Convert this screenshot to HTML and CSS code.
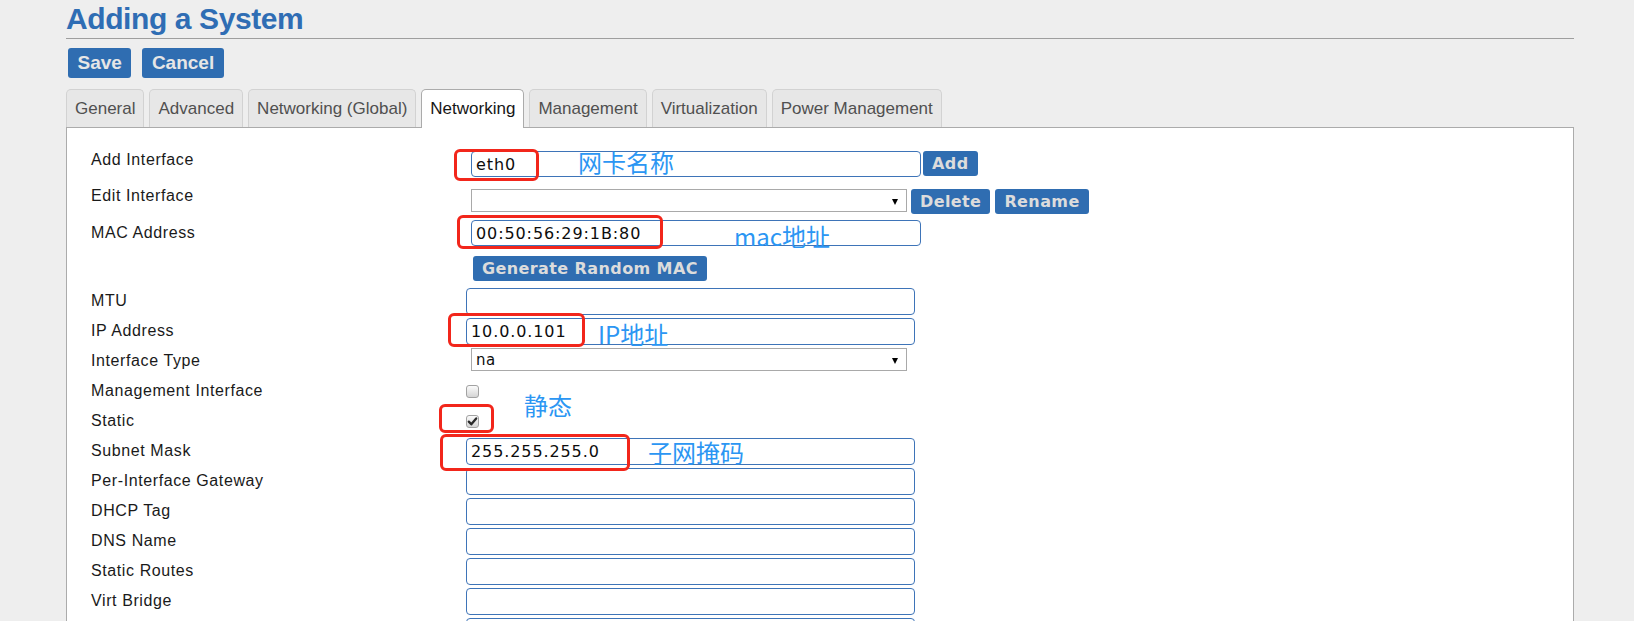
FILE: index.html
```html
<!DOCTYPE html>
<html lang="en">
<head>
<meta charset="utf-8">
<title>Adding a System</title>
<link rel="stylesheet" href="styles.css">
</head>
<body>
<div class="page">
  <h1 class="title">Adding a System</h1>
  <div class="actions">
    <button class="btn btn-lg">Save</button>
    <button class="btn btn-lg">Cancel</button>
  </div>
  <ul class="tabs">
    <li class="tab">General</li>
    <li class="tab">Advanced</li>
    <li class="tab">Networking (Global)</li>
    <li class="tab tab-active">Networking</li>
    <li class="tab">Management</li>
    <li class="tab">Virtualization</li>
    <li class="tab">Power Management</li>
  </ul>
  <div class="panel">
    <div class="row row-top row-add">
      <label class="lbl">Add Interface</label>
      <input class="txt txt-main" type="text" value="eth0">
      <button class="btn btn-sm btn-add">Add</button>
    </div>
    <div class="row row-top row-edit">
      <label class="lbl">Edit Interface</label>
      <div class="select select-edit"><select><option></option></select></div>
      <button class="btn btn-sm btn-delete">Delete</button>
      <button class="btn btn-sm btn-rename">Rename</button>
    </div>
    <div class="row row-mac">
      <label class="lbl">MAC Address</label>
      <input class="txt txt-main" type="text" value="00:50:56:29:1B:80">
    </div>
    <div class="row row-gen">
      <span class="lbl"></span>
      <button class="btn btn-sm btn-gen">Generate Random MAC</button>
    </div>
    <div class="details">
      <div class="row row-d"><label class="lbl">MTU</label><input class="txt txt-detail" type="text" value=""></div>
      <div class="row row-d"><label class="lbl">IP Address</label><input class="txt txt-detail" type="text" value="10.0.0.101"></div>
      <div class="row row-d"><label class="lbl">Interface Type</label><div class="select select-type"><select><option>na</option></select></div></div>
      <div class="row row-d"><label class="lbl">Management Interface</label><span class="check" role="checkbox" aria-checked="false"></span></div>
      <div class="row row-d"><label class="lbl">Static</label><span class="check" role="checkbox" aria-checked="true"><svg class="tick" width="11" height="11" viewBox="0 0 11 11"><path d="M1.8 5.6 L4.3 8.3 L9.2 2.4" fill="none" stroke="#2a2a2a" stroke-width="2.3" stroke-linecap="round" stroke-linejoin="round"/></svg></span></div>
      <div class="row row-d"><label class="lbl">Subnet Mask</label><input class="txt txt-detail" type="text" value="255.255.255.0"></div>
      <div class="row row-d"><label class="lbl">Per-Interface Gateway</label><input class="txt txt-detail" type="text" value=""></div>
      <div class="row row-d"><label class="lbl">DHCP Tag</label><input class="txt txt-detail" type="text" value=""></div>
      <div class="row row-d"><label class="lbl">DNS Name</label><input class="txt txt-detail" type="text" value=""></div>
      <div class="row row-d"><label class="lbl">Static Routes</label><input class="txt txt-detail" type="text" value=""></div>
      <div class="row row-d"><label class="lbl">Virt Bridge</label><input class="txt txt-detail" type="text" value=""></div>
      <div class="row row-d"><span class="lbl"></span><input class="txt txt-detail" type="text" value=""></div>
    </div>
  </div>

  <div class="mark mark-eth"></div>
  <div class="mark mark-mac"></div>
  <div class="mark mark-ip"></div>
  <div class="mark mark-static"></div>
  <div class="mark mark-mask"></div>

  <div class="note note-eth">网卡名称</div>
  <div class="note note-mac">mac地址</div>
  <div class="note note-ip">IP地址</div>
  <div class="note note-static">静态</div>
  <div class="note note-mask">子网掩码</div>
</div>
</body>
</html>
```

FILE: styles.css
```css
html, body {
  margin: 0;
  padding: 0;
  overflow: hidden;
}
body {
  background: #eeeeee;
  font-family: "Liberation Sans", Arial, sans-serif;
  color: #1a1a1a;
}
.page {
  position: relative;
  width: 1508px;
  margin-left: 66px;
}
.title {
  margin: 0;
  padding: 1px 0;
  font-size: 30px;
  line-height: 36px;
  font-weight: bold;
  letter-spacing: -0.4px;
  color: #2f6db4;
  border-bottom: 1px solid #9e9e9e;
}
.actions {
  display: flex;
  gap: 11px;
  margin-top: 9px;
  padding-left: 2px;
}
.btn {
  border: 0;
  border-radius: 3px;
  background: #2f6db1;
  color: #e6e6e6;
  cursor: pointer;
  white-space: nowrap;
}
.btn-lg {
  height: 30px;
  padding: 0 9.5px;
  font: bold 19px "Liberation Sans", Arial, sans-serif;
}
.btn-sm {
  height: 25px;
  padding: 0 9px;
  font: bold 16px "DejaVu Sans", Verdana, sans-serif;
  letter-spacing: 0.4px;
  color: #dcdcdc;
}
.tabs {
  display: flex;
  align-items: flex-end;
  gap: 5px;
  height: 38px;
  margin: 11px 0 0;
  padding: 0;
  list-style: none;
}
.tab {
  box-sizing: border-box;
  height: 38px;
  padding: 0 8px;
  display: flex;
  align-items: center;
  border: 1px solid #d2d2d2;
  border-bottom: 0;
  border-radius: 5px 5px 0 0;
  background: #e7e7e7;
  color: #505050;
  font-size: 17px;
  white-space: nowrap;
}
.tab-active {
  position: relative;
  z-index: 1;
  height: 39px;
  margin-bottom: -1px;
  padding-bottom: 1px;
  background: #fff;
  border-color: #ababab;
  color: #161616;
}
.panel {
  background: #fff;
  border: 1px solid #ababab;
  border-bottom: 0;
  padding: 23px 24px 40px;
}
.row {
  display: flex;
  align-items: center;
}
.row-top {
  align-items: flex-start;
}
.lbl {
  flex: none;
  width: 375px;
  font-size: 16px;
  line-height: 18px;
  letter-spacing: 0.6px;
  color: #1a1a1a;
}
.row-add {
  height: 26px;
}
.row-edit {
  margin-top: 10px;
}
.row-edit .select,
.row-edit .btn {
  margin-top: 2px;
}
.row-mac {
  margin-top: 6px;
  height: 26px;
}
.row-gen {
  margin-top: 10px;
}
.details {
  margin-top: 5px;
}
.row-d {
  height: 30px;
}
.txt {
  box-sizing: border-box;
  border: 1px solid #3e74b8;
  border-radius: 4px;
  background: #fff;
  padding: 0 4px;
  font: 16px "DejaVu Sans", Verdana, sans-serif;
  letter-spacing: 0.9px;
  color: #0d0d0d;
  outline: none;
}
.txt-main {
  width: 450px;
  height: 26px;
  margin-left: 5px;
}
.txt-detail {
  width: 449px;
  height: 27px;
}
.btn-add {
  margin-left: 2px;
}
.btn-delete {
  margin-left: 4px;
}
.btn-rename {
  margin-left: 5px;
}
.btn-gen {
  margin-left: 7px;
}
.select {
  position: relative;
  box-sizing: border-box;
  width: 436px;
  height: 23px;
  margin-left: 5px;
  border: 1px solid #a9a9a9;
  background: #fff;
}
.select select {
  appearance: none;
  -webkit-appearance: none;
  display: block;
  width: 100%;
  height: 100%;
  margin: 0;
  border: 0;
  background: transparent;
  padding: 0 4px;
  font: 15px "DejaVu Sans", Verdana, sans-serif;
  letter-spacing: 0.5px;
  color: #0d0d0d;
  outline: none;
}
.select::after {
  content: "";
  position: absolute;
  right: 8px;
  top: 50%;
  margin-top: -2px;
  border-left: 3.5px solid transparent;
  border-right: 3.5px solid transparent;
  border-top: 6px solid #000;
  pointer-events: none;
}
.select-type {
  align-self: flex-start;
  margin-top: 2px;
}
.check {
  box-sizing: border-box;
  width: 13px;
  height: 13px;
  display: flex;
  align-items: center;
  justify-content: center;
  border: 1px solid #a2a2a2;
  border-radius: 3px;
  background: linear-gradient(#fbfbfb, #d5d5d5);
}
.tick {
  display: block;
}

/* screenshot annotations drawn over the form */
.mark {
  position: absolute;
  z-index: 2;
  box-sizing: border-box;
  border: 3px solid #f2261b;
  border-radius: 6px;
}
.mark-eth { left: 388px; top: 149px; width: 85px; height: 32px; }
.mark-mac { left: 391px; top: 215px; width: 206px; height: 34px; }
.mark-ip { left: 382px; top: 313px; width: 137px; height: 34px; }
.mark-static { left: 373px; top: 404px; width: 55px; height: 29px; }
.mark-mask { left: 374px; top: 434px; width: 190px; height: 37px; }

.note {
  position: absolute;
  z-index: 2;
  font-family: "Noto Sans CJK SC", "Noto Sans", sans-serif;
  font-size: 24px;
  line-height: 24px;
  color: #2b96f3;
  white-space: nowrap;
}
.note-eth { left: 512px; top: 150px; }
.note-mac { left: 668px; top: 224px; }
.note-ip { left: 532px; top: 322px; }
.note-static { left: 458px; top: 393px; }
.note-mask { left: 582px; top: 440px; }
```
